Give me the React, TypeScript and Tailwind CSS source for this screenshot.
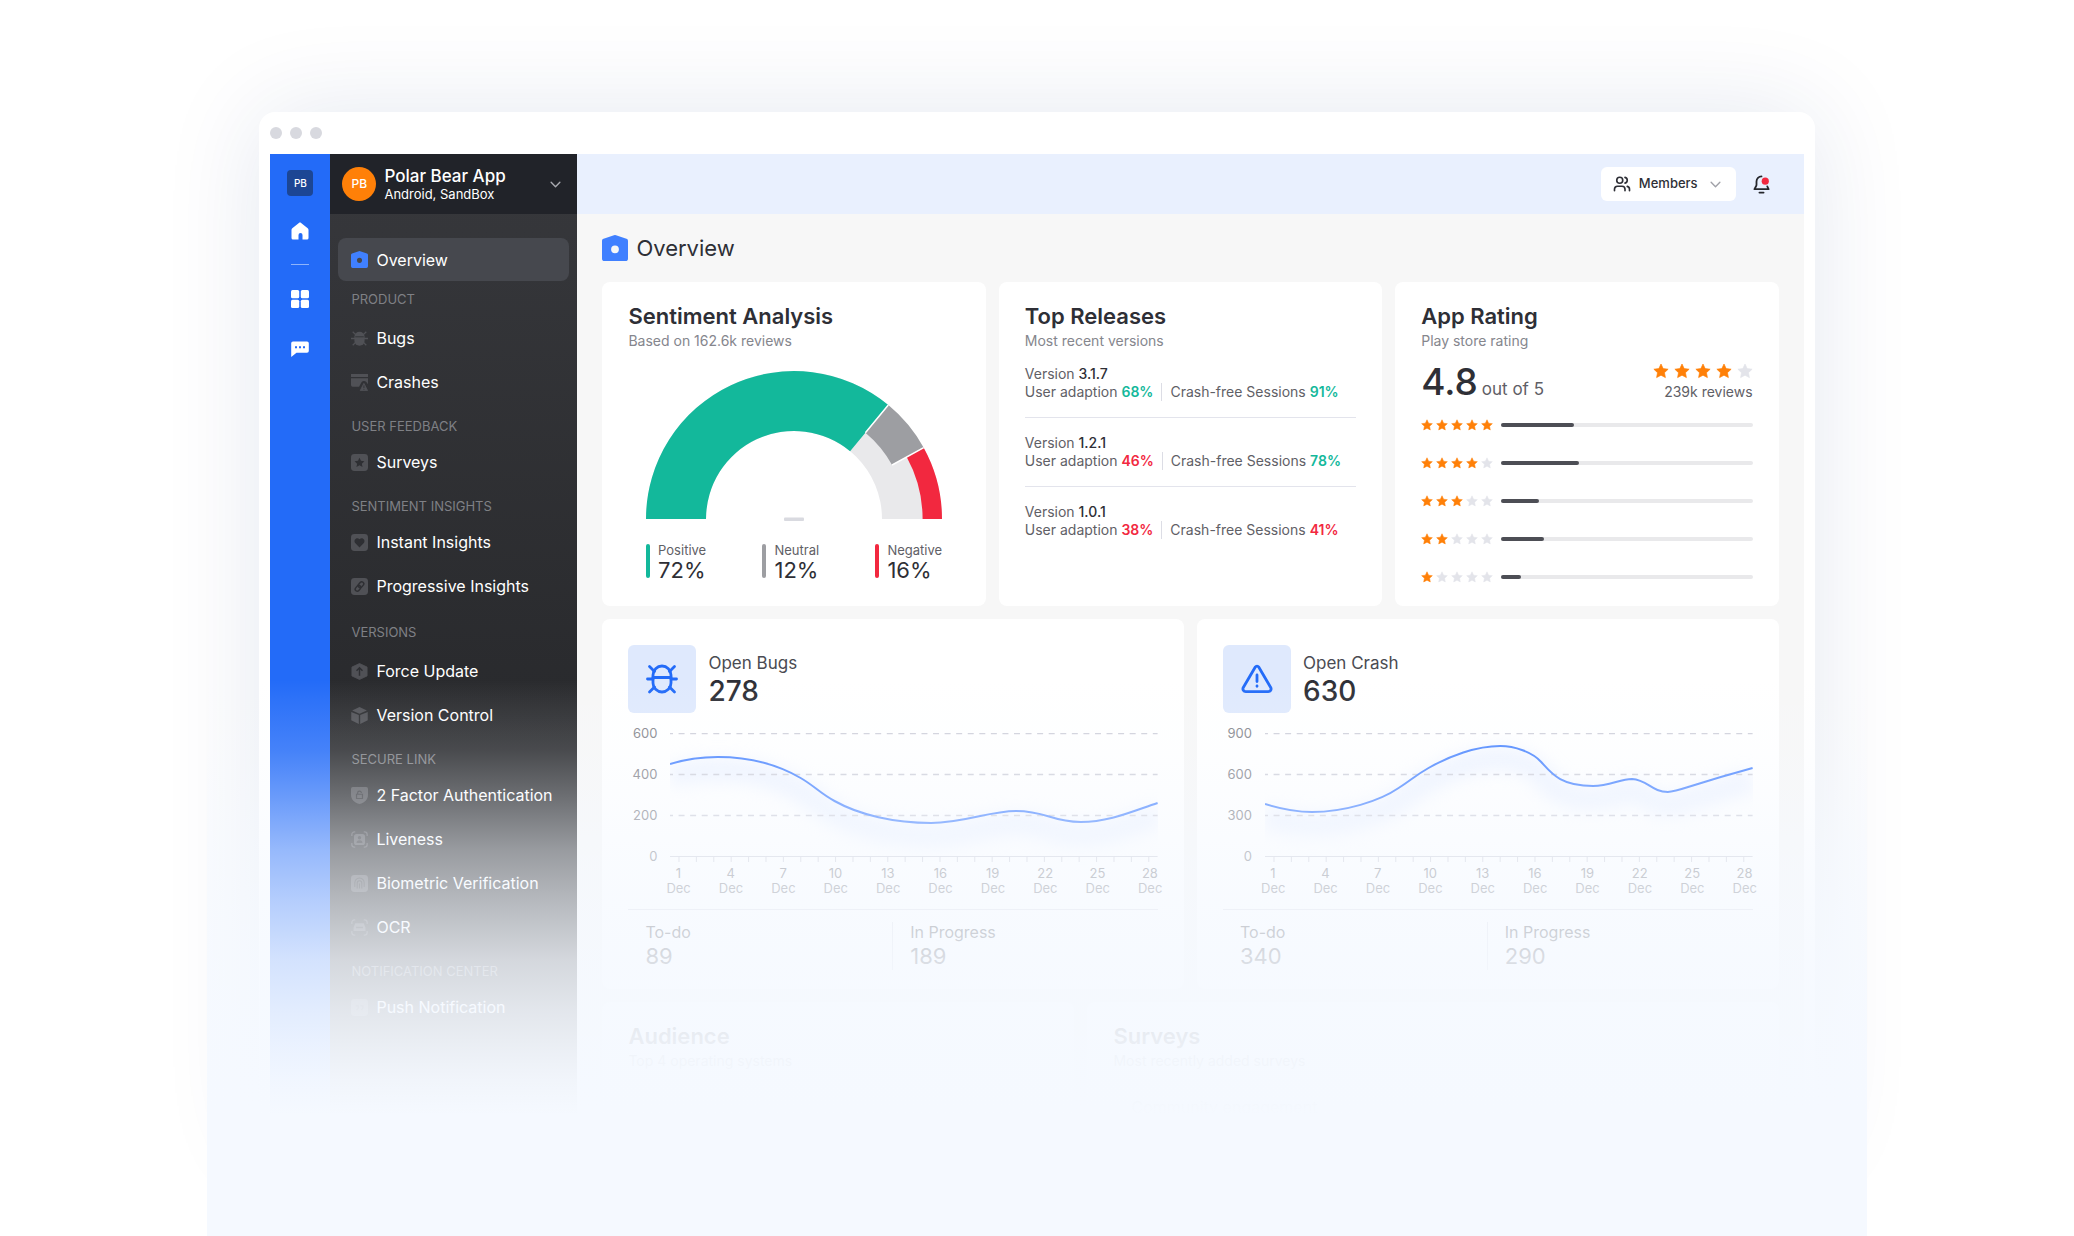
import { Users } from "lucide-react";
import type { ReactNode } from "react";

const nav = [
  { items: [{ label: "Overview", icon: "overview" }] },
  {
    title: "PRODUCT",
    spacing: "pt-2 pb-[7px]",
    items: [{ label: "Bugs", icon: "bug" }, { label: "Crashes", icon: "crash" }],
  },
  { title: "USER FEEDBACK", items: [{ label: "Surveys", icon: "star" }] },
  {
    title: "SENTIMENT INSIGHTS",
    items: [{ label: "Instant Insights", icon: "heart" }, { label: "Progressive Insights", icon: "link" }],
  },
  {
    title: "VERSIONS",
    spacing: "pt-[14px] pb-[7px]",
    items: [{ label: "Force Update", icon: "update" }, { label: "Version Control", icon: "cube" }],
  },
  {
    title: "SECURE LINK",
    items: [
      { label: "2 Factor Authentication", icon: "shield" },
      { label: "Liveness", icon: "face" },
      { label: "Biometric Verification", icon: "finger" },
      { label: "OCR", icon: "ocr" },
    ],
  },
  { title: "NOTIFICATION CENTER", items: [{ label: "Push Notification", icon: "quote" }] },
];

const sentiment = [
  { label: "Positive", value: "72%", color: "bg-[#13b89b]" },
  { label: "Neutral", value: "12%", color: "bg-[#9d9ea2]" },
  { label: "Negative", value: "16%", color: "bg-[#f2283f]" },
];

const releases = [
  { version: "3.1.7", adaption: 68, sessions: 91 },
  { version: "1.2.1", adaption: 46, sessions: 78 },
  { version: "1.0.1", adaption: 38, sessions: 41 },
];

const ratings = [
  { stars: 5, share: 29 },
  { stars: 4, share: 31 },
  { stars: 3, share: 15 },
  { stars: 2, share: 17 },
  { stars: 1, share: 8 },
];

const days = [1, 4, 7, 10, 13, 16, 19, 22, 25, 28];

const bugsLine =
  "M0 31C16 26 32 24 48 24C86 24 112 34 131 45C145 53 150 60 165 68C190 82 225 90 262 90C295 90 320 78 347 78C378 78 382 89 412 89C440 89 462 79 489 70";
const crashLine =
  "M0 71C16 76 32 79 47 79C80 79 115 68 134 55C148 46 150 43 164 35C185 23 212 13 236 13C250 13 268 19 277 29C287 40 296 53 329 53C346 53 356 46 368 46C384 47 388 59 404 59C414 59 426 52 489 35";

const starPath = "M12 1.5l3.2 6.9 7.5.9-5.5 5.2 1.4 7.4L12 18.3l-6.6 3.6 1.4-7.4L1.3 9.3l7.5-.9z";

const dark = "#2e2f33";

function OverviewIcon({ className }: { className: string }) {
  return (
    <svg viewBox="0 0 20 20" className={className} aria-hidden="true">
      <path
        fillRule="evenodd"
        fill="#4080ff"
        d="M9.2.2a2.500 2.500 0 0 1 1.600 0l8 2.700c.8.3 1.200.9 1.200 1.700V18a2 2 0 0 1-2 2H2a2 2 0 0 1-2-2V4.600c0-.8.4-1.400 1.200-1.700zM10 8a3 3 0 1 0 0 6 3 3 0 0 0 0-6z"
      />
    </svg>
  );
}

function NavIcon({ name }: { name: string }) {
  if (name === "overview") return <OverviewIcon className="size-[17px] shrink-0" />;
  const tile = <rect width="20" height="20" rx="4" fill="currentColor" />;
  return (
    <svg viewBox="0 0 20 20" className="size-[17px] shrink-0" fill="none" aria-hidden="true">
      {name === "bug" && (
        <>
          <path d="M2 2l4 4M18 2l-4 4M2 18l4-4M18 18l-4-4M0 10h20" stroke="currentColor" strokeWidth="1.5" />
          <rect x="4" y="2" width="12" height="16.5" rx="6" fill="currentColor" />
          <path d="M5 8h10" stroke={dark} />
        </>
      )}
      {name === "crash" && (
        <>
          <path d="M0 0h20v3.500H0zM0 5h20v7l-2-2.500a3.500 3.500 0 0 0-5.500 0L9.500 15H2a2 2 0 0 1-2-2z" fill="currentColor" />
          <path d="M15.200 11l4.300 8.500h-8.600z" fill="currentColor" stroke="currentColor" strokeLinejoin="round" />
          <path d="M15.200 13.500v3M15.200 17.500v1" stroke={dark} />
        </>
      )}
      {name === "star" && (
        <>
          {tile}
          <path d={starPath} transform="translate(3.5 3.5) scale(.54)" fill={dark} />
        </>
      )}
      {name === "heart" && (
        <>
          {tile}
          <path d="M10 16L4.900 10.600C2.200 7 7 2.800 10 6.200c3-3.400 7.800.8 5.100 4.400z" fill={dark} />
        </>
      )}
      {name === "link" && (
        <>
          {tile}
          <g transform="rotate(-50 10 10)" stroke={dark} strokeWidth="1.7">
            <rect x="3.5" y="7.6" width="7.5" height="4.8" rx="2.4" />
            <rect x="9" y="7.6" width="7.5" height="4.8" rx="2.4" />
          </g>
        </>
      )}
      {name === "update" && (
        <>
          <path d="M10 .6l8.900 4.200v10.400L10 19.400l-8.900-4.200V4.800z" fill="currentColor" stroke="currentColor" strokeLinejoin="round" />
          <path d="M10 15V6M6.500 9L10 5.500 13.500 9" stroke={dark} strokeWidth="1.7" />
        </>
      )}
      {name === "cube" && (
        <path d="M10 0l8.700 4.200L10 8 1.300 4.200zM.3 5.800L9.200 9.500V20L.3 15.500zM19.700 5.800L10.800 9.500V20l8.900-4.500z" fill="currentColor" />
      )}
      {name === "shield" && (
        <>
          <path d="M2 0h16a2 2 0 0 1 2 2v7c0 5.500-4 9.500-10 11C4 18.500 0 14.500 0 9V2a2 2 0 0 1 2-2z" fill="currentColor" />
          <path d="M6.500 8.500h7v5h-7zM7.800 8.500V7a2.200 2.200 0 0 1 4.400 0" stroke={dark} strokeWidth="1.4" />
        </>
      )}
      {(name === "face" || name === "ocr") && (
        <>
          <path
            d="M1 6V4a3 3 0 0 1 3-3h1M15 1h1a3 3 0 0 1 3 3v2M19 14v2a3 3 0 0 1-3 3h-1M5 19H4a3 3 0 0 1-3-3v-2"
            stroke="currentColor"
            strokeWidth="1.5"
          />
          {name === "face" ? (
            <>
              <rect x="3.5" y="3.5" width="13" height="13" rx="3" fill="currentColor" />
              <circle cx="10" cy="8" r="2" fill={dark} />
              <path d="M6.500 14a3.500 3 0 0 1 7 0z" fill={dark} />
            </>
          ) : (
            <path fillRule="evenodd" d="M5 5h10l2 5v4H3v-4zM6 9h8v2H6z" fill="currentColor" />
          )}
        </>
      )}
      {name === "finger" && (
        <>
          {tile}
          <path d="M4.500 14V9a5.500 5.500 0 0 1 11 0v5M7.300 16V9.500a2.700 2.700 0 0 1 5.400 0V16M10 10v6" stroke={dark} strokeWidth="1.2" />
        </>
      )}
      {name === "quote" && (
        <>
          {tile}
          <path d="M5.500 8h3v3l-2 2M11 8h3v3l-2 2" stroke={dark} strokeWidth="1.5" />
        </>
      )}
    </svg>
  );
}

function Chevron({ className }: { className: string }) {
  return (
    <svg
      viewBox="0 0 12 8"
      className={className}
      fill="none"
      stroke="currentColor"
      strokeWidth="1.6"
      strokeLinecap="round"
      strokeLinejoin="round"
      aria-hidden="true"
    >
      <path d="M1 1.500l5 5 5-5" />
    </svg>
  );
}

function Stars({ count, size, gap }: { count: number; size: string; gap: string }) {
  return (
    <div className={`flex ${gap}`} role="img" aria-label={`${count} stars`}>
      {[1, 2, 3, 4, 5].map((n) => (
        <svg key={n} viewBox="0 0 24 24" className={size}>
          <path
            d={starPath}
            fill={n <= count ? "#ff8008" : "#e3e4ea"}
            stroke={n <= count ? "#ff8008" : "#e3e4ea"}
            strokeLinejoin="round"
          />
        </svg>
      ))}
    </div>
  );
}

function Rail() {
  return (
    <nav className="flex w-[60px] shrink-0 flex-col items-center bg-[#236bf8] pt-4">
      <a href="#workspace" className="grid size-[26px] place-items-center rounded bg-[#1c4694] text-[10px] font-medium text-white">
        PB
      </a>
      <a href="#home" aria-label="Home" className="mt-[26px]">
        <svg viewBox="0 0 18 18" className="size-[18px]" fill="#fff">
          <path d="M9 .5c.4 0 .8.2 1.100.4l6.600 5.400c.5.4.8 1 .8 1.600V16a1.500 1.500 0 0 1-1.500 1.500h-4.500V13a2 2 0 0 0-4 0v4.500H2A1.500 1.500 0 0 1 .5 16V7.900c0-.6.3-1.200.8-1.600L7.900.9c.3-.2.700-.4 1.100-.4z" />
        </svg>
      </a>
      <span className="mt-6 h-px w-[18px] bg-[#8fb4fb]" />
      <a href="#apps" aria-label="Apps" className="mt-[25px]">
        <svg viewBox="0 0 18 18" className="size-[18px]" fill="#fff">
          <rect width="8.2" height="8.2" rx="1.5" />
          <rect x="9.8" width="8.2" height="8.2" rx="1.5" />
          <rect y="9.8" width="8.2" height="8.2" rx="1.5" />
          <rect x="9.8" y="9.8" width="8.2" height="8.2" rx="1.5" />
        </svg>
      </a>
      <a href="#messages" aria-label="Messages" className="mt-8">
        <svg viewBox="0 0 18 18" className="size-[18px]">
          <path
            d="M2 1.500h14a1.800 1.800 0 0 1 1.800 1.800V11a1.800 1.800 0 0 1-1.800 1.800H5.500L.2 17V3.300A1.800 1.800 0 0 1 2 1.500z"
            fill="#fff"
          />
          <path d="M4 6.200h2v2H4zM8 6.200h2v2H8zM12 6.200h2v2h-2z" fill="#236bf8" />
        </svg>
      </a>
    </nav>
  );
}

function Sidebar() {
  return (
    <aside className="w-[247px] shrink-0 bg-gradient-to-b from-[#37383c] to-[#28292c] to-60% pb-[76px]">
      <button type="button" className="flex h-[60px] w-full items-center bg-[#212329] pr-4 pl-3 text-left text-white">
        <span className="grid size-[34px] shrink-0 place-items-center rounded-full bg-[#ff8008] text-xs font-medium">PB</span>
        <span className="ml-2 flex-1">
          <span className="block text-[17px] leading-5 font-medium">Polar Bear App</span>
          <span className="block text-[13px] leading-4">Android, SandBox</span>
        </span>
        <Chevron className="h-[7px] w-[11px] text-[#a9aab0]" />
      </button>
      <nav className="px-2 pt-6">
        {nav.map((group) => (
          <section key={group.items[0].label}>
            {group.title && (
              <h2 className={`${group.spacing ?? "pt-3 pb-1"} pl-[13px] text-[13px] leading-5 text-[#7f8085]`}>{group.title}</h2>
            )}
            {group.items.map((item) => (
              <a
                key={item.label}
                href={`#${item.icon}`}
                className={`flex items-center gap-2 pl-[13px] text-base text-[#505156] ${
                  group.title ? "h-11" : "h-[43px] rounded-lg bg-[#46484e]"
                }`}
              >
                <NavIcon name={item.icon} />
                <span className="text-white">{item.label}</span>
              </a>
            ))}
          </section>
        ))}
      </nav>
    </aside>
  );
}

function TopBar() {
  return (
    <header className="flex h-[60px] items-center justify-end gap-[17px] bg-[#e9f0fe] pr-[34px]">
      <button
        type="button"
        className="flex h-[34px] items-center rounded-md bg-white pr-[15px] pl-3 text-[13px] font-medium text-[#2e2f36]"
      >
        <Users className="mr-2 size-[18px]" strokeWidth={2.2} />
        Members
        <Chevron className="ml-3 h-[7px] w-[11px] text-[#a0a1a8]" />
      </button>
      <button type="button" aria-label="Notifications">
        <svg viewBox="0 0 18 20" className="h-[19px] w-[17px]" fill="none" stroke="#25262b" strokeWidth="1.9" strokeLinecap="round">
          <path d="M9 1.500a5.300 5.300 0 0 0-5.300 5.300v3.400c0 .6-.2 1.200-.5 1.700L1.500 15h15l-1.400-3M6.800 18.600h4.400" strokeLinejoin="round" />
          <circle cx="13" cy="6.5" r="3.8" fill="#f2283f" stroke="none" />
        </svg>
      </button>
    </header>
  );
}

function Card({ title, subtitle, children }: { title: string; subtitle: string; children?: ReactNode }) {
  return (
    <section className="rounded-lg bg-white px-[26px] pt-5">
      <h2 className="text-[22px] leading-7 font-semibold text-[#2e2f36]">{title}</h2>
      <p className="mt-px text-sm leading-5 text-[#85868d]">{subtitle}</p>
      {children}
    </section>
  );
}

function Gauge() {
  return (
    <svg viewBox="0 0 296 150" className="mx-auto mt-5 block h-[150px]" role="img" aria-label="Sentiment split">
      <path d="M0 148a148 148 0 0 1 296 0h-60a88 88 0 0 0-176 0z" fill="#e9e9eb" />
      <path d="M0 148A148 148 0 0 1 242.300 34L204.100 80.200A88 88 0 0 0 60 148z" fill="#13b89b" />
      <path d="M242.300 34A148 148 0 0 1 277.700 76.700L246.100 94A112 112 0 0 0 219.400 61.700z" fill="#9d9ea2" />
      <path d="M277.700 76.700A148 148 0 0 1 296 148h-19.400A128.600 128.600 0 0 0 260.700 86z" fill="#f2283f" />
      <path d="M242.300 34L219.400 61.700M277.700 76.700L246.100 94" stroke="#fff" strokeWidth="1.5" />
      <rect x="138" y="146.5" width="20" height="3.5" rx="1" fill="#d9dae0" />
    </svg>
  );
}

function Percent({ value }: { value: number }) {
  return <b className={`font-semibold ${value > 50 ? "text-[#13b89b]" : "text-[#f2283f]"}`}>{value}%</b>;
}

function ChartCard({
  title,
  total,
  scale,
  line,
  todo,
  progress,
  children,
}: {
  title: string;
  total: number;
  scale: number[];
  line: string;
  todo: number;
  progress: number;
  children: ReactNode;
}) {
  return (
    <section className="rounded-lg bg-white px-[26px] pt-[26px] pb-[19px]">
      <div className="flex items-center gap-3">
        <span className="grid size-[68px] place-items-center rounded-md bg-[#dfe9fd]">{children}</span>
        <div>
          <h2 className="text-[17px] leading-6 text-[#4a4b52]">{title}</h2>
          <p className="text-[28px] leading-8 font-medium text-[#2e2f36]">{total}</p>
        </div>
      </div>
      <div className="mt-3 flex gap-[13px] text-[13px] text-[#85868d]">
        <div className="flex h-[139px] w-[29px] shrink-0 flex-col justify-between text-right leading-4">
          {scale.map((n) => (
            <span key={n}>{n}</span>
          ))}
        </div>
        <div className="min-w-0 flex-1 pt-2">
          <svg viewBox="0 0 489 133" preserveAspectRatio="none" className="block h-[133px] w-full" fill="none">
            <g filter="blur(8px)">
              <path d={line} transform="translate(0 13)" stroke="#d6e3ff" strokeOpacity=".4" strokeWidth="24" />
            </g>
            <path d="M0 .5h489M0 41.500h489M0 82.500h489" stroke="#cfd0da" strokeWidth="1.3" strokeDasharray="6 5.600" strokeDashoffset="3" />
            <path d="M0 123.500h489" stroke="#cfd0da" />
            {Array.from({ length: 28 }, (_, i) => (
              <path key={i} d={`M${9 + i * 17.45} 123v6`} stroke="#cfd0da" />
            ))}
            <path d={line} stroke="#4c86ff" strokeWidth="2" />
          </svg>
          <div className="-mx-1 flex justify-between text-center leading-[15px]">
            {days.map((day) => (
              <span key={day} className="w-6">
                {day} Dec
              </span>
            ))}
          </div>
        </div>
      </div>
      <dl className="mt-[13px] grid grid-cols-2 border-t border-[#dcdde5] pt-3 text-[#4a4b52]">
        <div className="border-r border-[#dcdde5] pl-[17px]">
          <dt className="leading-5">To-do</dt>
          <dd className="text-[22px] leading-7">{todo}</dd>
        </div>
        <div className="pl-[17px]">
          <dt className="leading-5">In Progress</dt>
          <dd className="text-[22px] leading-7">{progress}</dd>
        </div>
      </dl>
    </section>
  );
}

function Dashboard() {
  return (
    <main className="px-[25px]">
      <h1 className="flex items-center gap-2 py-[21px] text-[22px] leading-[26px] text-[#2e2f36]">
        <OverviewIcon className="size-[26px]" />
        Overview
      </h1>
      <div className="grid grid-cols-3 gap-[13px]">
        <Card title="Sentiment Analysis" subtitle="Based on 162.6k reviews">
          <Gauge />
          <dl className="mx-auto mt-[23px] mb-[22px] flex max-w-[296px] justify-between">
            {sentiment.map((item) => (
              <div key={item.label} className="flex gap-2">
                <span className={`h-[34px] w-1 rounded-sm ${item.color}`} />
                <div>
                  <dt className="text-[13px] leading-3 text-[#5f6066]">{item.label}</dt>
                  <dd className="text-[22px] leading-7 text-[#2e2f36]">{item.value}</dd>
                </div>
              </div>
            ))}
          </dl>
        </Card>
        <Card title="Top Releases" subtitle="Most recent versions">
          <ul className="mt-[14px] divide-y divide-[#e3e4ec] text-sm leading-[18px] text-[#5f6066]">
            {releases.map((release) => (
              <li key={release.version} className="py-4 first:pt-0">
                <p>
                  Version <span className="font-medium text-[#2e2f36]">{release.version}</span>
                </p>
                <p className="flex">
                  <span>
                    User adaption <Percent value={release.adaption} />
                  </span>
                  <span className="ml-2 border-l border-[#dcdde5] pl-2">
                    Crash-free Sessions <Percent value={release.sessions} />
                  </span>
                </p>
              </li>
            ))}
          </ul>
        </Card>
        <Card title="App Rating" subtitle="Play store rating">
          <div className="mt-[11px] flex h-10 items-end justify-between text-[#5f6066]">
            <p className="flex items-baseline gap-1 text-[17px] leading-6">
              <span className="text-[37px] leading-10 font-medium text-[#2e2f36]">4.8</span>
              out of 5
            </p>
            <div className="flex flex-col items-end">
              <Stars count={4} size="size-4" gap="gap-[5px]" />
              <p className="mt-[3px] text-sm leading-5">239k reviews</p>
            </div>
          </div>
          <ul className="mt-[17px] space-y-[26px]">
            {ratings.map((row) => (
              <li key={row.stars} className="flex h-3 items-center gap-2">
                <Stars count={row.stars} size="size-3" gap="gap-[3px]" />
                <div className="h-1 flex-1 rounded-full bg-[#e9e9eb]">
                  <div className="h-1 rounded-full bg-[#4d4e55]" style={{ width: `${row.share}%` }} />
                </div>
              </li>
            ))}
          </ul>
        </Card>
      </div>
      <div className="mt-[13px] grid grid-cols-2 gap-[13px]">
        <ChartCard title="Open Bugs" total={278} scale={[600, 400, 200, 0]} line={bugsLine} todo={89} progress={189}>
          <svg viewBox="0 0 32 30" className="h-[30px] w-8" fill="none" stroke="#236bf8" strokeWidth="2.8" strokeLinecap="round">
            <rect x="7" y="2" width="18" height="26" rx="9" />
            <path d="M1.500 15h5.500M25 15h5.500M7 13.500h18M3.500 2.500l5 5M28.500 2.500l-5 5M3.500 28l5-5M28.500 28l-5-5" />
          </svg>
        </ChartCard>
        <ChartCard title="Open Crash" total={630} scale={[900, 600, 300, 0]} line={crashLine} todo={340} progress={290}>
          <svg
            viewBox="0 0 32 30"
            className="h-[30px] w-8"
            fill="none"
            stroke="#236bf8"
            strokeWidth="2.8"
            strokeLinecap="round"
            strokeLinejoin="round"
          >
            <path d="M14.300 3a2 2 0 0 1 3.400 0l12 20.500a2.800 2.800 0 0 1-2.400 4.200H4.700a2.800 2.800 0 0 1-2.400-4.200zM16 11v6.500M16 22v.3" />
          </svg>
        </ChartCard>
      </div>
      <div className="mt-[13px] grid grid-cols-[472fr_691fr] gap-[13px]">
        <Card title="Audience" subtitle="Top 4 operating systems" />
        <Card title="Surveys" subtitle="Most recently added surveys">
          <p className="py-6 pl-[18px] text-base">Community engagement</p>
        </Card>
      </div>
    </main>
  );
}

export default function App() {
  return (
    <div className="min-h-screen overflow-hidden bg-white font-['Inter',sans-serif]">
      <div className="relative mx-auto min-h-screen w-4/5 px-[52px] pt-28">
        <div className="rounded-t-2xl bg-white px-[11px] shadow-[0_0_100px_rgba(20,45,120,0.11)]">
          <div className="flex h-[42px] items-center gap-2">
            <span className="size-3 rounded-full bg-[#d8d9df]" />
            <span className="size-3 rounded-full bg-[#d8d9df]" />
            <span className="size-3 rounded-full bg-[#d8d9df]" />
          </div>
          <div className="flex">
            <Rail />
            <Sidebar />
            <div className="min-w-0 flex-1 bg-[#f7f7f7]">
              <TopBar />
              <Dashboard />
            </div>
          </div>
        </div>
        {/* fades the lower half of the window into the page */}
        <div className="pointer-events-none absolute inset-x-0 top-[680px] bottom-0 bg-[linear-gradient(to_bottom,#f5f9ff00_0px,#f5f9ff0d_20px,#f5f9ff29_70px,#f5f9ff54_115px,#f5f9ff8c_170px,#f5f9ffb0_220px,#f5f9ffd6_280px,#f5f9ffe8_330px,#f5f9fff3_370px,#f5f9fffa_400px,#f5f9ff_435px)]" />
      </div>
    </div>
  );
}
